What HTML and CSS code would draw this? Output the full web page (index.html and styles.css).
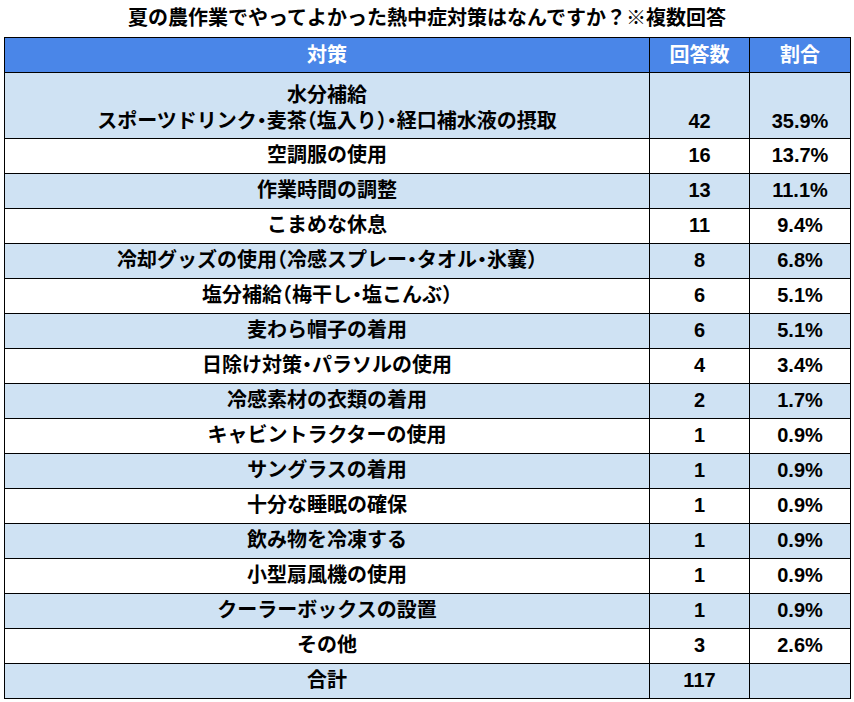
FILE: index.html
```html
<!DOCTYPE html>
<html lang="ja">
<head>
<meta charset="utf-8">
<link rel="stylesheet" href="styles.css">
</head>
<body>
<div class="page">
  <h1 class="title">夏の農作業でやってよかった熱中症対策はなんですか？※複数回答</h1>
  <table class="grid">
    <colgroup>
      <col class="c-item">
      <col class="c-num">
      <col class="c-pct">
    </colgroup>
    <thead>
      <tr class="head"><th>対策</th><th>回答数</th><th>割合</th></tr>
    </thead>
    <tbody>
      <tr class="tall"><td>水分補給<br>スポーツドリンク<span class="hw">・</span>麦茶<span class="hw">（</span>塩入り<span class="hw">）・</span>経口補水液の摂取</td><td>42</td><td>35.9%</td></tr>
      <tr><td>空調服の使用</td><td>16</td><td>13.7%</td></tr>
      <tr><td>作業時間の調整</td><td>13</td><td>11.1%</td></tr>
      <tr><td>こまめな休息</td><td>11</td><td>9.4%</td></tr>
      <tr><td>冷却グッズの使用<span class="hw">（</span>冷感スプレー<span class="hw">・</span>タオル<span class="hw">・</span>氷嚢<span class="hw">）</span></td><td>8</td><td>6.8%</td></tr>
      <tr><td>塩分補給<span class="hw">（</span>梅干し<span class="hw">・</span>塩こんぶ<span class="hw">）</span></td><td>6</td><td>5.1%</td></tr>
      <tr><td>麦わら帽子の着用</td><td>6</td><td>5.1%</td></tr>
      <tr><td>日除け対策<span class="hw">・</span>パラソルの使用</td><td>4</td><td>3.4%</td></tr>
      <tr><td>冷感素材の衣類の着用</td><td>2</td><td>1.7%</td></tr>
      <tr><td>キャビントラクターの使用</td><td>1</td><td>0.9%</td></tr>
      <tr><td>サングラスの着用</td><td>1</td><td>0.9%</td></tr>
      <tr><td>十分な睡眠の確保</td><td>1</td><td>0.9%</td></tr>
      <tr><td>飲み物を冷凍する</td><td>1</td><td>0.9%</td></tr>
      <tr><td>小型扇風機の使用</td><td>1</td><td>0.9%</td></tr>
      <tr><td>クーラーボックスの設置</td><td>1</td><td>0.9%</td></tr>
      <tr><td>その他</td><td>3</td><td>2.6%</td></tr>
      <tr><td>合計</td><td>117</td><td></td></tr>
    </tbody>
  </table>
</div>
</body>
</html>
```
FILE: styles.css
```css
html, body {
  margin: 0;
  padding: 0;
  background: #ffffff;
}
body {
  font-family: "Liberation Sans", "Noto Sans CJK JP", sans-serif;
  font-weight: bold;
  color: #000000;
}
.page {
  width: 854px;
  height: 702px;
  overflow: hidden;
}
.title {
  margin: 0;
  height: 37px;
  font-size: 20px;
  line-height: 37px;
  text-align: center;
  font-weight: bold;
}
.grid {
  margin-left: 4px;
  border-collapse: collapse;
  table-layout: fixed;
  width: 846px;
  font-size: 20px;
}
.c-item { width: 645px; }
.c-num { width: 100px; }
.c-pct { width: 101px; }
.grid th,
.grid td {
  border: 1px solid #000000;
  padding: 0 4px 6px;
  height: 28px;
  line-height: 24px;
  text-align: center;
  vertical-align: bottom;
  white-space: nowrap;
}
.hw {
  font-feature-settings: "halt";
}
.head th {
  background: #4a86e8;
  color: #ffffff;
  vertical-align: middle;
  padding: 0 4px;
  height: 34px;
}
.grid tbody tr:nth-child(odd) td {
  background: #cfe2f3;
}
.grid tbody tr:nth-child(even) td {
  background: #ffffff;
}
.grid tr.tall td {
  height: 61px;
  line-height: 26px;
  padding-bottom: 4px;
}
```
